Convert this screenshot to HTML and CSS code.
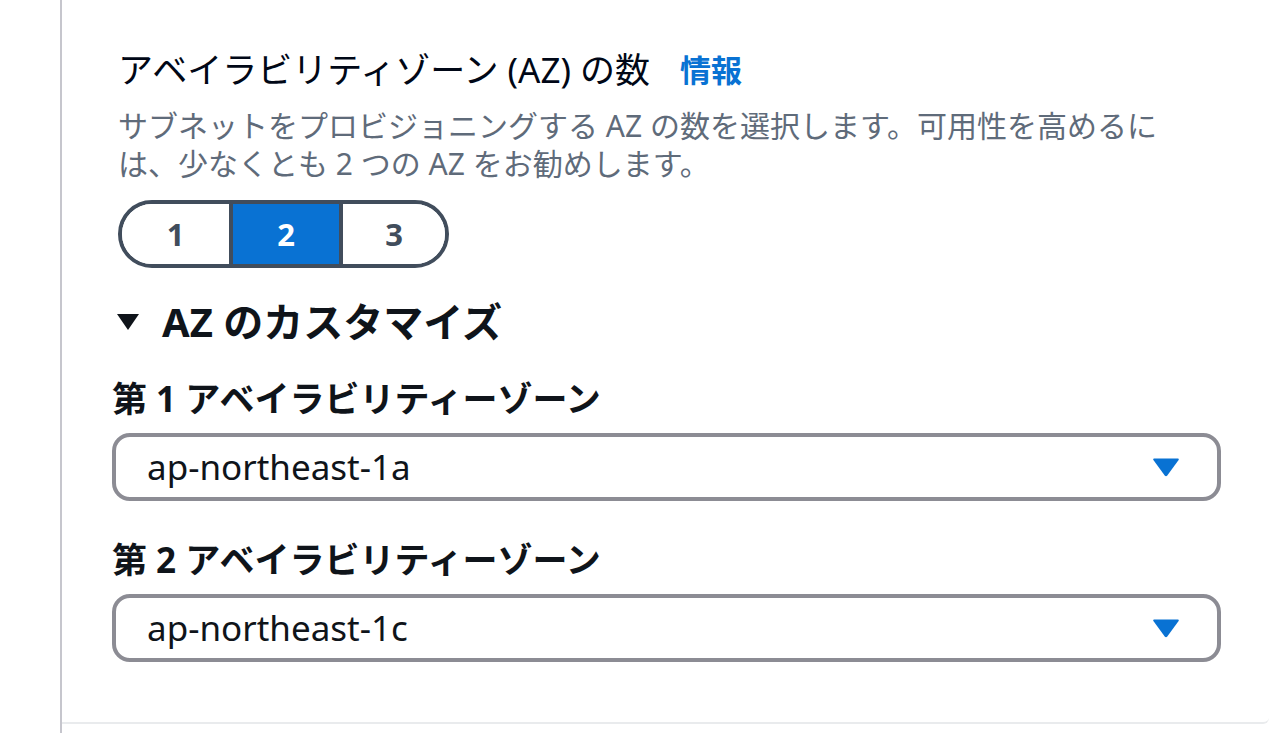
FILE: index.html
```html
<!DOCTYPE html>
<html lang="ja">
<head>
<meta charset="utf-8">
<link rel="stylesheet" href="styles.css">
</head>
<body>
<div class="rail">
  <div class="panel">
    <div class="field">
      <div class="title-row">
        <span class="title">アベイラビリティゾーン (AZ) の数</span>
        <a class="info" href="#">情報</a>
      </div>
      <p class="desc">サブネットをプロビジョニングする AZ の数を選択します。可用性を高めるには、少なくとも 2 つの AZ をお勧めします。</p>
      <div class="segmented">
        <button class="seg">1</button>
        <button class="seg seg-active">2</button>
        <button class="seg">3</button>
      </div>
    </div>

    <div class="expander">
      <svg class="exp-caret" width="24" height="18" viewBox="0 0 24 18"><path d="M1 1 H23 L12 17 Z" fill="#0f141a"/></svg>
      <span class="exp-title">AZ のカスタマイズ</span>
    </div>

    <div class="select-field">
      <div class="label">第 1 アベイラビリティーゾーン</div>
      <div class="select">
        <span class="select-value">ap-northeast-1a</span>
        <svg class="select-caret" width="28" height="20" viewBox="0 0 28 20"><path d="M2 1.5 H26 Q27.5 1.5 26.6 3 L15.3 18.5 Q14 20 12.7 18.5 L1.4 3 Q0.5 1.5 2 1.5 Z" fill="#0972d3"/></svg>
      </div>
    </div>

    <div class="select-field second">
      <div class="label">第 2 アベイラビリティーゾーン</div>
      <div class="select">
        <span class="select-value">ap-northeast-1c</span>
        <svg class="select-caret" width="28" height="20" viewBox="0 0 28 20"><path d="M2 1.5 H26 Q27.5 1.5 26.6 3 L15.3 18.5 Q14 20 12.7 18.5 L1.4 3 Q0.5 1.5 2 1.5 Z" fill="#0972d3"/></svg>
      </div>
    </div>
  </div>
</div>
</body>
</html>
```

FILE: styles.css
```css
html, body {
  margin: 0;
  padding: 0;
  background: #ffffff;
}

body {
  font-family: "Noto Sans", "Noto Sans CJK JP", sans-serif;
  color: #000716;
  width: 1271px;
  height: 733px;
  overflow: hidden;
}

.rail {
  margin-left: 60px;
  border-left: 2px solid #c6c6cd;
  height: 733px;
  box-sizing: border-box;
}

.panel {
  height: 724px;
  box-sizing: border-box;
  border-bottom: 2px solid #e9ebed;
  border-bottom-right-radius: 6px;
  margin-right: 2px;
  padding: 45px 0 0 56px;
}

.title-row {
  display: flex;
  align-items: center;
  height: 50px;
}

.title {
  font-size: 35px;
  line-height: 50px;
  font-weight: 400;
}

.info {
  margin-left: 30px;
  font-size: 31px;
  line-height: 50px;
  font-weight: 700;
  color: #0972d3;
  text-decoration: none;
}

.desc {
  margin: 12px 0 0;
  width: 1060px;
  font-size: 30px;
  line-height: 38px;
  color: #5f6b7a;
}

.segmented {
  margin-top: 17px;
  display: inline-flex;
  border: 4px solid #414d5c;
  border-radius: 34px;
  overflow: hidden;
  height: 68px;
  box-sizing: border-box;
}

.seg {
  box-sizing: content-box;
  width: 106px;
  border: 0;
  background: #ffffff;
  color: #414d5c;
  font-family: "Noto Sans", "Noto Sans CJK JP", sans-serif;
  font-size: 31px;
  font-weight: 700;
  padding: 0;
  margin: 0;
}

.seg + .seg {
  border-left: 4px solid #414d5c;
}

.seg:first-child {
  width: 107px;
}

.seg:last-child {
  width: 102px;
}

.seg-active {
  background: #0972d3;
  color: #ffffff;
}

.expander {
  margin-top: 29px;
  display: flex;
  align-items: center;
  height: 50px;
}

.exp-caret {
  margin-left: -2px;
  margin-right: 22px;
}

.exp-title {
  font-size: 40px;
  line-height: 50px;
  font-weight: 700;
  color: #0f141a;
}

.select-field {
  margin-top: 27px;
  margin-left: -6px;
  width: 1109px;
}

.select-field.second {
  margin-top: 34px;
}

.label {
  font-size: 35px;
  line-height: 50px;
  font-weight: 700;
  color: #0f141a;
}

.select {
  margin-top: 9px;
  height: 68px;
  box-sizing: border-box;
  border: 4px solid #8c8c94;
  border-radius: 18px;
  display: flex;
  align-items: center;
  justify-content: space-between;
  padding: 0 37px 0 31px;
}

.select-value {
  font-size: 35px;
  line-height: 50px;
  color: #0f141a;
}

.select-caret {
  display: block;
}
```
